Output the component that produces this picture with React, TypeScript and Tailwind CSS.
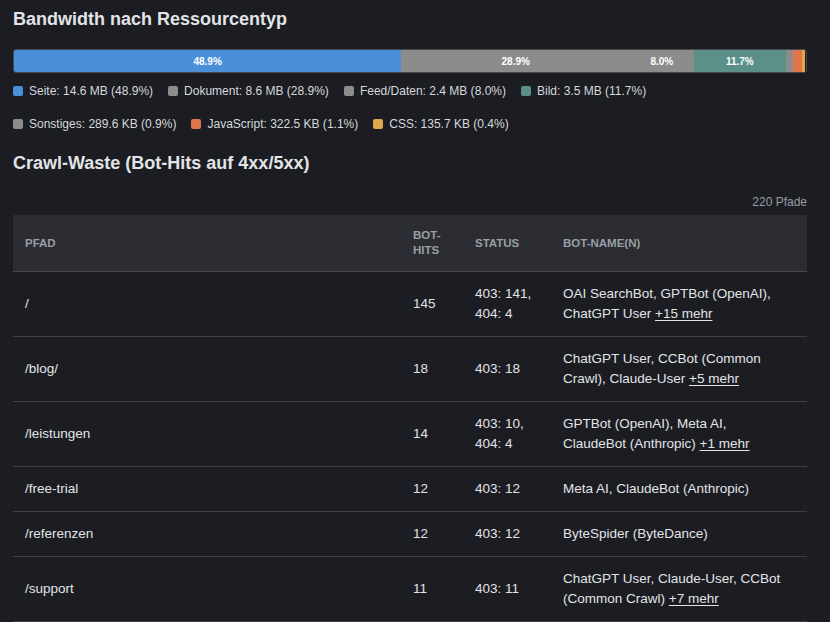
import React from 'react';

const segments = [
  { label: 'Seite', value: '14.6 MB', pct: 48.9, color: 'bg-[#4a90d9]', show: true },
  { label: 'Dokument', value: '8.6 MB', pct: 28.9, color: 'bg-[#8c8c8c]', show: true },
  { label: 'Feed/Daten', value: '2.4 MB', pct: 8.0, color: 'bg-[#8c8c8c]', show: true },
  { label: 'Bild', value: '3.5 MB', pct: 11.7, color: 'bg-[#5a9088]', show: true },
  { label: 'Sonstiges', value: '289.6 KB', pct: 0.9, color: 'bg-[#8c8c8c]', show: false },
  { label: 'JavaScript', value: '322.5 KB', pct: 1.1, color: 'bg-[#e0744a]', show: false },
  { label: 'CSS', value: '135.7 KB', pct: 0.4, color: 'bg-[#e0a84a]', show: false },
];

type Row = { path: string; hits: number; status: string[]; bots: string; more?: string };

const rows: Row[] = [
  { path: '/', hits: 145, status: ['403: 141,', '404: 4'], bots: 'OAI SearchBot, GPTBot (OpenAI), ChatGPT User', more: '+15 mehr' },
  { path: '/blog/', hits: 18, status: ['403: 18'], bots: 'ChatGPT User, CCBot (Common Crawl), Claude-User', more: '+5 mehr' },
  { path: '/leistungen', hits: 14, status: ['403: 10,', '404: 4'], bots: 'GPTBot (OpenAI), Meta AI, ClaudeBot (Anthropic)', more: '+1 mehr' },
  { path: '/free-trial', hits: 12, status: ['403: 12'], bots: 'Meta AI, ClaudeBot (Anthropic)' },
  { path: '/referenzen', hits: 12, status: ['403: 12'], bots: 'ByteSpider (ByteDance)' },
  { path: '/support', hits: 11, status: ['403: 11'], bots: 'ChatGPT User, Claude-User, CCBot (Common Crawl)', more: '+7 mehr' },
];

export default function App() {
  return (
    <div className="h-[622px] bg-[#1b1d22] px-[13px] pt-[7px] text-[#e2e4e8] font-['Liberation_Sans',Arial,sans-serif] overflow-hidden">
      <h2 className="text-[18px] font-bold leading-[24px]">Bandwidth nach Ressourcentyp</h2>

      <div className="mt-[18px] flex h-[24px] w-[794px] overflow-hidden rounded-[3px] border border-[#45484e]">
        {segments.map((s) => (
          <div
            key={s.label}
            className={`${s.color} flex items-center justify-center text-[10px] font-bold text-white`}
            style={{ width: `${s.pct}%` }}
          >
            {s.show ? `${s.pct.toFixed(1)}%` : ''}
          </div>
        ))}
      </div>

      <div className="mt-[10px] flex w-[794px] flex-wrap gap-x-[15px] gap-y-[17px] text-[12px] leading-[16px] text-[#d6d8dc]">
        {segments.map((s) => (
          <div key={s.label} className="flex items-center gap-[6px]">
            <span className={`${s.color} inline-block h-[10px] w-[10px] rounded-[2px]`} />
            <span>
              {s.label}: {s.value} ({s.pct.toFixed(1)}%)
            </span>
          </div>
        ))}
      </div>

      <h2 className="mt-[19px] text-[18px] font-bold leading-[24px]">Crawl-Waste (Bot-Hits auf 4xx/5xx)</h2>

      <div className="mt-[19px] w-[794px] text-right text-[12px] leading-[16px] text-[#9a9ea5]">220 Pfade</div>

      <table className="mt-[5px] w-[794px] table-fixed border-collapse text-[13.5px] leading-[20px]">
        <colgroup>
          <col className="w-[388px]" />
          <col className="w-[62px]" />
          <col className="w-[88px]" />
          <col className="w-[256px]" />
        </colgroup>
        <thead>
          <tr className="bg-[#2b2d32] text-left text-[11.5px] font-bold uppercase leading-[15px] text-[#9a9ea5]">
            <th className="border-b border-[#45484e] px-3 py-[13px] font-bold">Pfad</th>
            <th className="border-b border-[#45484e] px-3 py-[13px] font-bold">
              Bot-
              <br />
              Hits
            </th>
            <th className="border-b border-[#45484e] px-3 py-[13px] font-bold">Status</th>
            <th className="border-b border-[#45484e] px-3 py-[13px] font-bold">Bot-Name(n)</th>
          </tr>
        </thead>
        <tbody>
          {rows.map((r) => (
            <tr key={r.path} className="border-b border-[#3c3f44]">
              <td className="px-3 py-3 align-middle">{r.path}</td>
              <td className="px-3 py-3 align-middle">{r.hits}</td>
              <td className="px-3 py-3 align-middle">
                {r.status.map((s) => (
                  <div key={s}>{s}</div>
                ))}
              </td>
              <td className="py-3 pl-3 pr-5 align-middle">
                {r.bots}
                {r.more && (
                  <>
                    {' '}
                    <span className="underline underline-offset-2">{r.more}</span>
                  </>
                )}
              </td>
            </tr>
          ))}
        </tbody>
      </table>
    </div>
  );
}
